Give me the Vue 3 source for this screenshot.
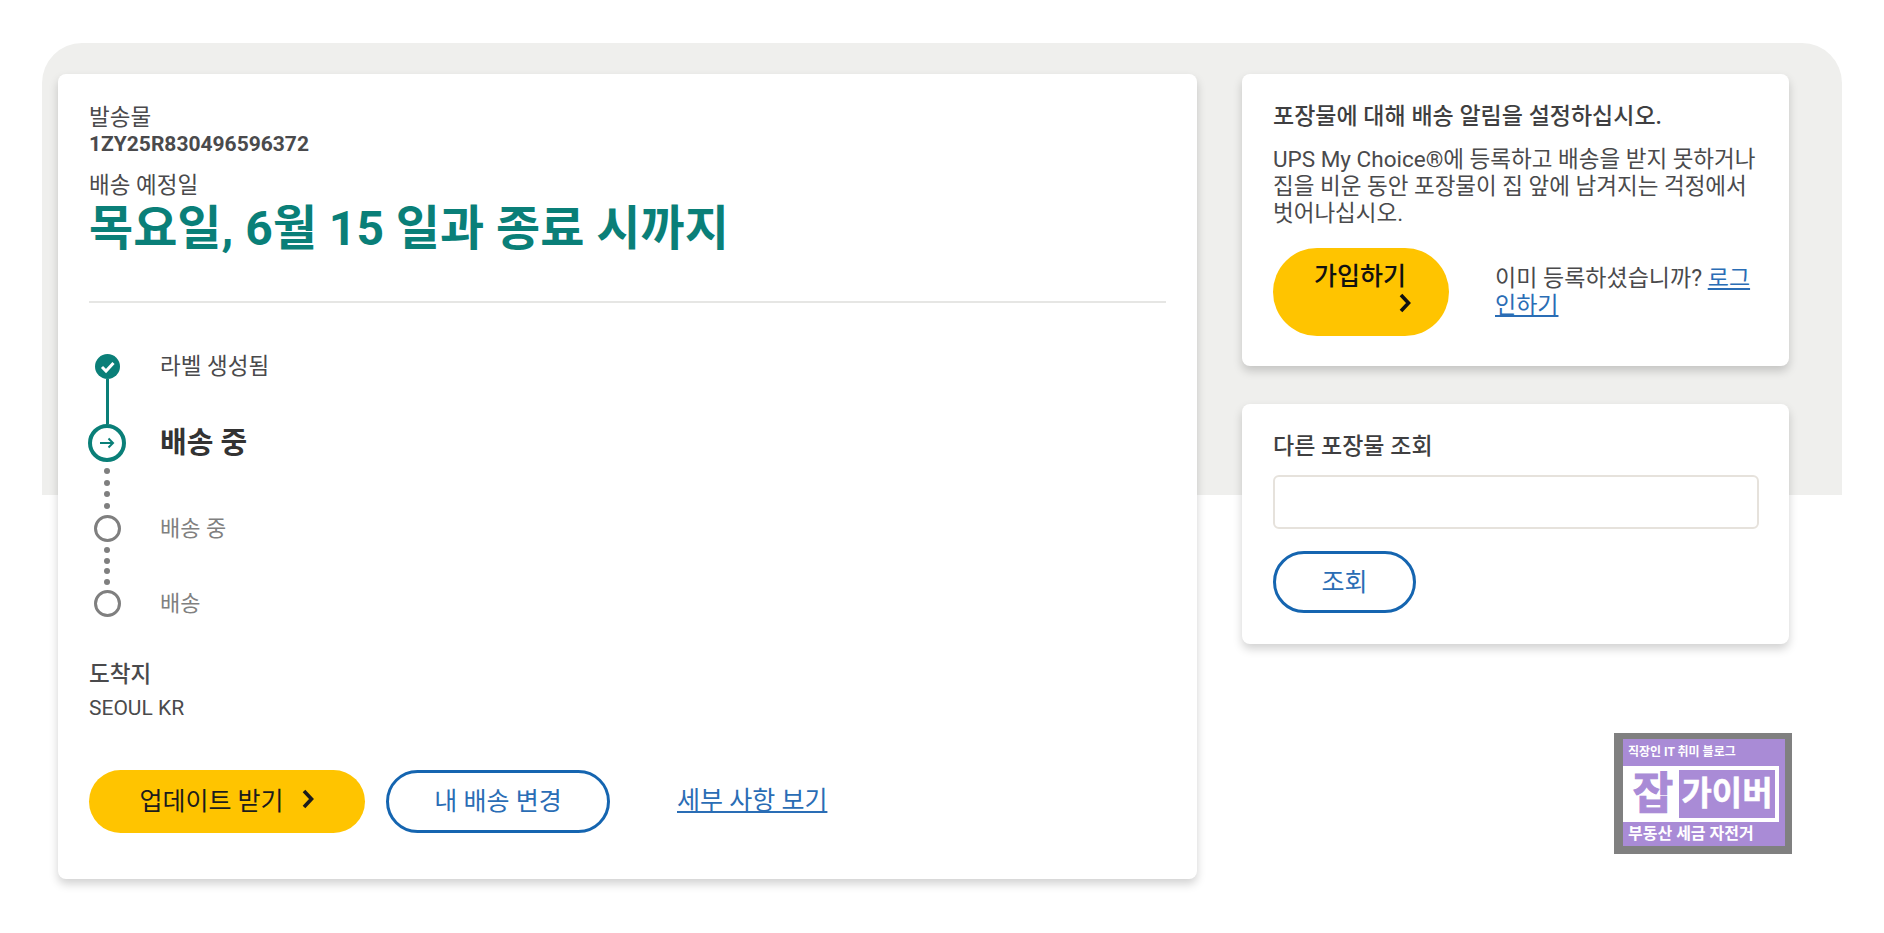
<template>
  <div class="page">
    <div class="stage">
      <div class="band" />
      <div class="content">
        <section class="card main">
          <div class="label">발송물</div>
          <div class="tracking">1ZY25R830496596372</div>
          <div class="label eta">배송 예정일</div>
          <h1 class="date">목요일, 6월 15 일과 종료 시까지</h1>
          <hr class="divider">

          <div class="steps">
            <template v-for="step in steps" :key="step.key">
              <div v-if="step.line" class="connector">
                <span class="solid" :style="{ height: step.line + 'px' }" />
              </div>
              <div v-if="step.dots" class="connector dots" :style="{ height: step.dotsHeight + 'px' }">
                <span v-for="n in step.dots" :key="n" class="dot" />
              </div>
              <div class="step">
                <div class="rail">
                  <svg v-if="step.state === 'done'" width="25" height="25" viewBox="0 0 25 25">
                    <circle cx="12.5" cy="12.5" r="12.5" fill="#0a7f78" />
                    <path d="M7 13l4 4 7.5-8" fill="none" stroke="#fff" stroke-width="3" />
                  </svg>
                  <svg v-else-if="step.state === 'current'" width="38" height="38" viewBox="0 0 38 38">
                    <circle cx="19" cy="19" r="17" fill="#fff" stroke="#0a7f78" stroke-width="4" />
                    <path d="M12 19h13M20.5 14.5l4.5 4.5-4.5 4.5" fill="none" stroke="#0a7f78" stroke-width="2" />
                  </svg>
                  <svg v-else width="27" height="27" viewBox="0 0 27 27">
                    <circle cx="13.5" cy="13.5" r="12" fill="#fff" stroke="#7f7f7f" stroke-width="3" />
                  </svg>
                </div>
                <div class="step-text" :class="step.state">{{ step.text }}</div>
              </div>
            </template>
          </div>

          <div class="dest-title">도착지</div>
          <div class="dest">SEOUL KR</div>

          <div class="actions">
            <button class="btn primary updates">
              업데이트 받기
              <svg width="14" height="20" viewBox="0 0 14 20"><path d="M3 2l7.5 8L3 18" fill="none" stroke="#1c1c1c" stroke-width="3.6" /></svg>
            </button>
            <button class="btn outline change">내 배송 변경</button>
            <a class="link details" href="#">세부 사항 보기</a>
          </div>
        </section>

        <aside class="side">
          <section class="card promo">
            <h2 class="side-title">포장물에 대해 배송 알림을 설정하십시오.</h2>
            <p class="copy">UPS My Choice®에 등록하고 배송을 받지 못하거나 집을 비운 동안 포장물이 집 앞에 남겨지는 걱정에서 벗어나십시오.</p>
            <div class="signup">
              <button class="btn primary join">
                <span class="join-text">가입하기</span>
                <svg class="join-arrow" width="14" height="20" viewBox="0 0 14 20"><path d="M3 2l7.5 8L3 18" fill="none" stroke="#111" stroke-width="3.6" /></svg>
              </button>
              <p class="login">이미 등록하셨습니까? <a class="link" href="#">로그 인하기</a></p>
            </div>
          </section>

          <section class="card lookup">
            <h2 class="side-title">다른 포장물 조회</h2>
            <input class="field" type="text">
            <button class="btn outline track">조회</button>
          </section>
        </aside>
      </div>
    </div>

    <div class="badge">
      <div class="badge-top">직장인 IT 취미 블로그</div>
      <div class="badge-mid">
        <span class="badge-one">잡</span>
        <span class="badge-name">가이버</span>
      </div>
      <div class="badge-bottom">부동산 세금 자전거</div>
    </div>
  </div>
</template>

<script setup>
  const steps = [
    { key: 'label', state: 'done', text: '라벨 생성됨' },
    { key: 'moving', state: 'current', text: '배송 중', line: 45 },
    { key: 'transit', state: 'todo', text: '배송 중', dots: 4, dotsHeight: 53 },
    { key: 'delivered', state: 'todo', text: '배송', dots: 4, dotsHeight: 48 }
  ];
</script>

<style>
html, body {
  margin: 0;
  background: #fff;
}
</style>

<style scoped>
.page {
  position: relative;
  height: 933px;
  overflow: hidden;
  font-family: Roboto, "Noto Sans CJK KR", sans-serif;
  color: #4a4a4c;
}

.stage {
  display: grid;
  width: 1800px;
  margin: 43px 0 0 42px;
}

.band, .content {
  grid-area: 1 / 1;
}

.band {
  height: 452px;
  background: #efefed;
  border-radius: 40px 40px 0 0;
}

.content {
  display: flex;
  gap: 45px;
  padding: 31px 0 0 16px;
}

.card {
  box-sizing: border-box;
  background: #fff;
  border-radius: 8px;
  box-shadow: 0 5px 10px rgba(0, 0, 0, 0.18);
}

.main {
  width: 1139px;
  padding: 30px 31px 46px;
}

.label {
  font-size: 22.5px;
  line-height: 26px;
}

.tracking {
  font-size: 21px;
  font-weight: 700;
  line-height: 28px;
}

.eta {
  margin-top: 14px;
}

.date {
  margin: 3px 0 0;
  font-size: 48px;
  font-weight: 700;
  line-height: 56px;
  color: #0a7f78;
}

.divider {
  margin: 44px 0 0;
  border: 0;
  border-top: 2px solid #e6e6e4;
}

.steps {
  margin: 50px 0 0 -1px;
}

.step {
  display: flex;
  align-items: center;
}

.rail, .connector {
  display: flex;
  flex-direction: column;
  align-items: center;
  width: 38px;
}

.connector .solid {
  display: block;
  width: 3px;
  background: #0a7f78;
}

.connector.dots {
  justify-content: space-evenly;
}

.dot {
  width: 6px;
  height: 6px;
  border-radius: 50%;
  background: #7f7f7f;
}

.step-text {
  margin-left: 34px;
  font-size: 22.5px;
  line-height: 26px;
  color: #4a4a4c;
}

.step-text.current {
  font-size: 29px;
  font-weight: 700;
  line-height: 34px;
  color: #333;
}

.step-text.todo {
  font-size: 22px;
  color: #808080;
}

.dest-title {
  margin-top: 44px;
  font-size: 22.5px;
  font-weight: 500;
  line-height: 26px;
}

.dest {
  margin-top: 8px;
  font-size: 21px;
  line-height: 26px;
}

.actions {
  display: flex;
  align-items: center;
  margin-top: 49px;
}

.btn {
  box-sizing: border-box;
  display: inline-flex;
  align-items: center;
  justify-content: center;
  border-radius: 32px;
  font-family: inherit;
  font-size: 25px;
}

.primary {
  border: 0;
  background: #ffc400;
  color: #1c1c1c;
}

.outline {
  border: 3px solid #1565b0;
  background: #fff;
  color: #2a6db5;
}

.updates {
  gap: 17px;
  width: 276px;
  height: 63px;
  padding: 0 0 5px;
}

.change {
  width: 224px;
  height: 63px;
  margin-left: 21px;
  padding: 0 0 5px;
}

.link {
  color: #2a6db5;
  text-decoration: underline;
}

.details {
  margin-left: 67px;
  padding-bottom: 7px;
  font-size: 25px;
}

.side {
  display: flex;
  flex-direction: column;
  gap: 38px;
  width: 547px;
}

.promo {
  padding: 30px 31px 30px;
}

.side-title {
  margin: 0;
  font-size: 23px;
  font-weight: 500;
  line-height: 26px;
  color: #3f3f41;
}

.copy {
  margin: 16px 0 0;
  font-size: 22.5px;
  line-height: 27px;
}

.signup {
  display: flex;
  align-items: center;
  gap: 46px;
  margin-top: 21px;
}

.join {
  flex: none;
  flex-direction: column;
  align-items: flex-end;
  justify-content: flex-start;
  gap: 2px;
  width: 176px;
  height: 88px;
  padding: 15px 43px 0 0;
  border-radius: 44px;
  font-weight: 500;
  color: #111;
}

.join-text {
  line-height: 28px;
}

.join-arrow {
  margin-right: -6px;
}

.login {
  margin: 0;
  font-size: 23px;
  line-height: 27px;
}

.lookup {
  padding: 30px 31px 31px;
}

.field {
  display: block;
  box-sizing: border-box;
  width: 486px;
  height: 54px;
  margin-top: 15px;
  border: 2px solid #e6e2dc;
  border-radius: 6px;
  background: #fff;
}

.track {
  width: 143px;
  height: 62px;
  margin-top: 22px;
  padding: 0 0 4px;
}

.badge {
  position: absolute;
  left: 1614px;
  top: 733px;
  box-sizing: border-box;
  width: 178px;
  height: 121px;
  padding: 6px 7px 8px 9px;
  background: #808080;
  font-weight: 700;
  color: #fff;
}

.badge-top, .badge-bottom {
  background: #a98bd6;
  padding-left: 5px;
}

.badge-top {
  height: 27px;
  font-size: 12px;
  line-height: 27px;
}

.badge-mid {
  display: flex;
  align-items: center;
  width: 159px;
  height: 56px;
  padding: 4px;
  box-sizing: border-box;
  background: #fff;
  border-right: 3px solid #a98bd6;
  box-shadow: 3px 0 0 #a98bd6;
}

.badge-one {
  width: 52px;
  font-size: 44px;
  line-height: 48px;
  text-align: center;
  color: #a98bd6;
  -webkit-text-stroke: 1px #a98bd6;
}

.badge-name {
  flex: 1;
  height: 48px;
  background: #a98bd6;
  font-size: 33px;
  line-height: 48px;
  text-align: center;
  -webkit-text-stroke: 0.5px #fff;
}

.badge-bottom {
  height: 24px;
  font-size: 16px;
  line-height: 24px;
}
</style>
